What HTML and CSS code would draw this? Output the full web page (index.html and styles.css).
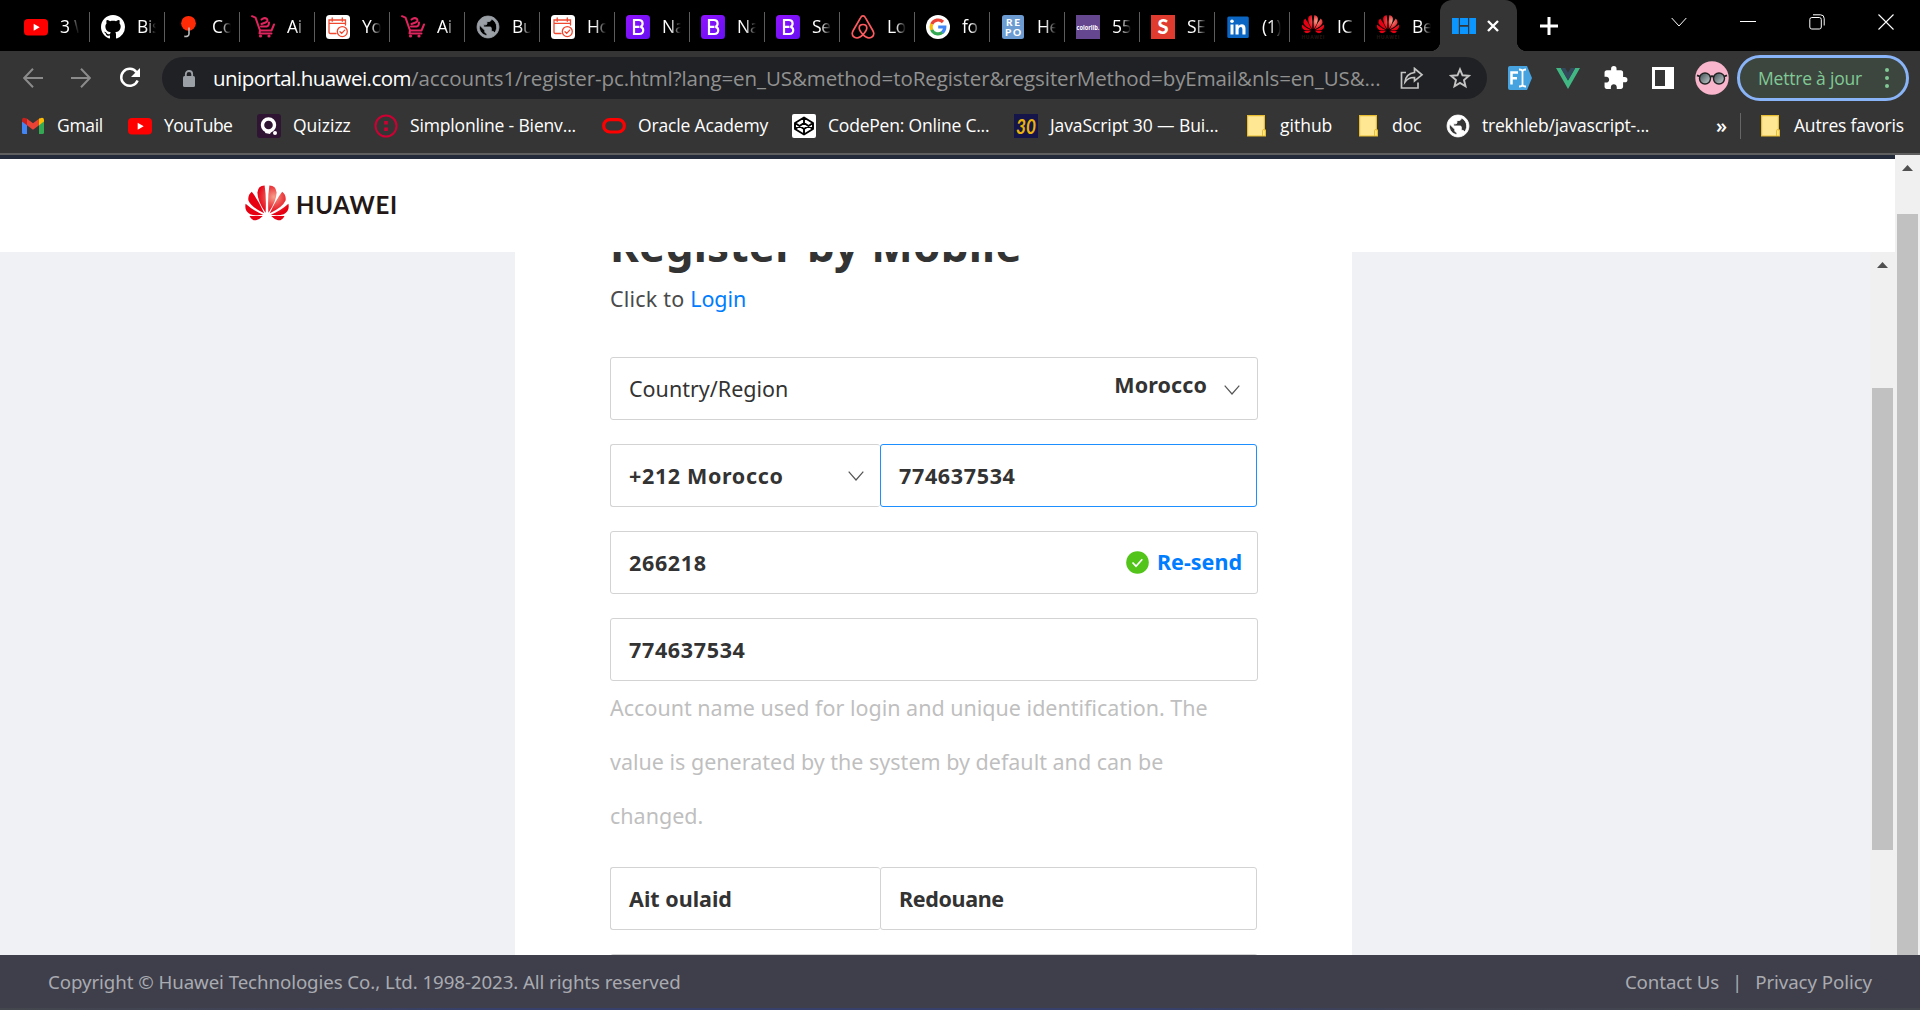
FILE: index.html
```html
<!DOCTYPE html>
<html lang="en">
<head>
<meta charset="utf-8">
<title>Register by Mobile</title>
<link rel="stylesheet" href="styles.css">
</head>
<body>
<svg class="defs" aria-hidden="true">
  <defs>
    <linearGradient id="bs" x1="0" y1="0" x2="1" y2="1"><stop offset="0" stop-color="#9013fe"/><stop offset="1" stop-color="#6610f2"/></linearGradient>
    <radialGradient id="hw" gradientUnits="userSpaceOnUse" cx="29" cy="12" r="17"><stop offset="0" stop-color="#f6a08c"/><stop offset=".5" stop-color="#ec4a4a"/><stop offset="1" stop-color="#e60012"/></radialGradient>
    <linearGradient id="lens" x1="0" y1="0" x2="1" y2="1"><stop offset="0" stop-color="#3c4a50"/><stop offset="1" stop-color="#c9d3d4"/></linearGradient>
    <symbol id="youtube" viewBox="0 0 24 24"><rect y="4" width="24" height="16.5" rx="4" fill="#f00"/><path d="M9.7 8.7v7l6-3.5z" fill="#fff"/></symbol>
    <symbol id="github" viewBox="0 0 16 16"><path fill="#fff" d="M8 0C3.58 0 0 3.58 0 8c0 3.54 2.29 6.53 5.47 7.59.4.07.55-.17.55-.38 0-.19-.01-.82-.01-1.49-2.01.37-2.53-.49-2.69-.94-.09-.23-.48-.94-.82-1.13-.28-.15-.68-.52-.01-.53.63-.01 1.08.58 1.23.82.72 1.21 1.87.87 2.33.66.07-.52.28-.87.51-1.07-1.78-.2-3.64-.89-3.64-3.95 0-.87.31-1.59.82-2.15-.08-.2-.36-1.02.08-2.12 0 0 .67-.21 2.2.82.64-.18 1.32-.27 2-.27s1.36.09 2 .27c1.53-1.04 2.2-.82 2.2-.82.44 1.1.16 1.92.08 2.12.51.56.82 1.27.82 2.15 0 3.07-1.87 3.75-3.65 3.95.29.25.54.73.54 1.48 0 1.07-.01 1.93-.01 2.2 0 .21.15.46.55.38A8.01 8.01 0 0 0 16 8c0-4.42-3.58-8-8-8z"/></symbol>
    <symbol id="balloon" viewBox="0 0 24 24"><circle cx="12.500" cy="8.300" r="7.400" fill="#ff2b06"/><path d="M13 12.500v6.300q0 3.200-4.700 2.600" fill="none" stroke="#bbb" stroke-width="1.600"/></symbol>
    <symbol id="cart" viewBox="0 0 24 24"><g fill="none" stroke="#e0245e" stroke-width="2" stroke-linecap="round" stroke-linejoin="round"><path d="M1 1.200l3.500 1.500 4.500 12.800h11.500L23 9.500"/><path d="M10.500 4.500q3-2.500 5.500-.5 1.500 2-1.500 3.500l-4 1.500M10 11.500h5.500q2.500-.5 2.500-4"/><path d="M9 15.500l-.5 3h12"/></g><circle cx="9.500" cy="21" r="1.600" fill="#e0245e"/><circle cx="18" cy="21" r="1.600" fill="#e0245e"/></symbol>
    <symbol id="calendar" viewBox="0 0 24 24"><rect width="24" height="24" rx="3.500" fill="#fff"/><g fill="none" stroke="#f0472f" stroke-width="1.300" stroke-linecap="round"><path d="M10 18.500H4.500q-1.500 0-1.500-1.500V5h16.500v5M3 8.300h16.500M6.200 3v3.300M16.300 3v3.300"/><circle cx="16.300" cy="16.600" r="5"/><path d="M14 16.700l1.700 1.700 3-3.300"/></g></symbol>
    <symbol id="globe" viewBox="1 1 22 22"><path fill="currentColor" stroke="currentColor" stroke-width=".8" d="M12 2C6.480 2 2 6.480 2 12s4.480 10 10 10 10-4.480 10-10S17.520 2 12 2zm-1 17.930c-3.950-.490-7-3.850-7-7.930 0-.620.080-1.210.210-1.790L9 15v1c0 1.100.900 2 2 2v1.930zm6.900-2.540c-.260-.810-1-1.390-1.900-1.390h-1v-3c0-.550-.450-1-1-1H8v-2h2c.550 0 1-.450 1-1V7h2c1.100 0 2-.900 2-2v-.410c2.930 1.190 5 4.060 5 7.410 0 2.080-.800 3.970-2.100 5.390z"/></symbol>
    <symbol id="bootstrap" viewBox="0 0 24 24"><rect width="24" height="24" rx="3.500" fill="url(#bs)"/><path d="M8 5v14h5.200q4-.1 4-3.800 0-2.900-2.800-3.400 2.200-.7 2.200-3.200Q16.600 5 12.800 5zM8 11.800h5.500" fill="none" stroke="#fff" stroke-width="2.200"/></symbol>
    <symbol id="airbnb" viewBox="0 0 24 24"><path d="M12 19.500q-3.800-4-3.800-6.500 0-3.500 3.800-3.500t3.800 3.500q0 2.500-3.800 6.500-3 3.500-6 3.500-4.500-.5-4.800-4.500.2-1.500 1-3L9.500 2.800Q10.500.9 12 .9t2.500 1.900L21.800 15.500q.8 1.500 1 3Q22.500 22.500 18 23q-3 0-6-3.500z" fill="none" stroke="#ff5a5f" stroke-width="1.700"/></symbol>
    <symbol id="google" viewBox="0 0 24 24"><circle cx="12" cy="12" r="12" fill="#fff"/><g fill="none" stroke-width="3.200"><path d="M17 7a7 7 0 0 0-11.300 2.200" stroke="#ea4335"/><path d="M5.800 9a7 7 0 0 0 0 6" stroke="#fbbc05"/><path d="M5.700 14.800A7 7 0 0 0 16.500 17.300" stroke="#34a853"/><path d="M12.200 12h6.600q0 3.500-2.500 5.500" stroke="#4285f4"/></g></symbol>
    <symbol id="colorlib" viewBox="0 0 24 24"><rect width="24" height="24" fill="#65478f"/><text x="12" y="14.500" font-family="Open Sans" font-size="6.800" font-weight="700" fill="#fff" text-anchor="middle" textLength="23" lengthAdjust="spacingAndGlyphs">colorlib.</text></symbol>
    <symbol id="repo" viewBox="0 0 24 24"><rect x="1" width="22" height="24" rx="2.500" fill="#6c9bd2"/><g font-family="Lato" font-weight="900" font-size="10" fill="#fff" text-anchor="middle"><text x="12" y="11" textLength="14">RE</text><text x="12" y="21" textLength="16">PO</text></g></symbol>
    <symbol id="sred" viewBox="0 0 24 24"><rect width="24" height="24" fill="#df3c2f"/><text x="12" y="19" font-family="Lato" font-weight="900" font-size="20" fill="#fff" text-anchor="middle">S</text></symbol>
    <symbol id="linkedin" viewBox="0 0 24 24"><rect x="1.300" y="1.500" width="21.500" height="21.500" rx="1.500" fill="#0a66c2"/><path fill="#fff" d="M4.500 9.500h3v10h-3zM9.500 9.500h3v1.400q1-1.600 3.200-1.600 3.800 0 3.800 4.300v5.900h-3.100v-5.300q0-2.300-1.700-2.300-2.100 0-2.100 2.500v5.100H9.500z"/><circle cx="6" cy="6.300" r="1.800" fill="#fff"/></symbol>
    <symbol id="petals" viewBox="0 0 44 36">
      <path d="M20.600 27.800Q21.500 12 19.600.6 13 .8 12.400 7.500q.2 9 8.200 20.300zM19.200 28.300Q13.500 15.500 6.800 6.800 2.600 10 3.400 15.600 6.500 22.500 19.200 28.300zM18.300 29.700Q8.500 25.800.6 18.700q-1.500 7.300 4.600 10.500 5.500 1.700 13.100.5zM17.800 30.900H4.500q2.500 4.900 6.500 4.400 3.500-1 6.800-4.400z"/>
      <path d="M23.400 27.800Q22.500 12 24.400.6 31 .8 31.600 7.500q-.2 9-8.200 20.300zM24.800 28.300Q30.500 15.500 37.200 6.800q4.200 3.200 3.400 8.800Q37.500 22.500 24.800 28.300zM25.700 29.700q9.800-3.900 17.700-11 1.500 7.300-4.600 10.500-5.500 1.700-13.100.5zM26.200 30.900h13.300q-2.500 4.900-6.500 4.400-3.500-1-6.800-4.400z"/>
    </symbol>
    <symbol id="huawei" viewBox="0 0 24 24"><use href="#petals" x="0" y="0" width="24" height="18.500" fill="url(#hw)"/><text x="12" y="23.700" font-family="Open Sans" font-size="5" font-weight="700" fill="#231815" text-anchor="middle" textLength="23">HUAWEI</text></symbol>
    <symbol id="gmail" viewBox="0 0 24 24"><path d="M1 7v11.500q0 1.500 1.500 1.500H6V10z" fill="#4285f4"/><path d="M23 7v11.500q0 1.500-1.500 1.500H18V10z" fill="#34a853"/><path d="M18 4.500v6.800l5-3.800V6q0-2.300-2-2.300-1 0-1.600.5z" fill="#fbbc04"/><path d="M6 4.500v6.800L1 7.500V6q0-2.300 2-2.300 1 0 1.600.5z" fill="#c5221f"/><path d="M6 4.800l6 4.500 6-4.500v6.500l-6 4.500-6-4.500z" fill="#ea4335"/></symbol>
    <symbol id="quizizz" viewBox="0 0 24 24"><rect width="24" height="24" rx="3" fill="#2f1434"/><circle cx="11.500" cy="11" r="6" fill="none" stroke="#fff" stroke-width="3.400"/><path d="M9 16.500l5 1.500-1 2-5-1z" fill="#fff"/><circle cx="18" cy="19" r="2" fill="#fff"/></symbol>
    <symbol id="simplon" viewBox="0 0 24 24"><circle cx="12" cy="12" r="10.500" fill="none" stroke="#ce0033" stroke-width="2"/><path d="M10.200 7h3.600v3.600h-3.600zM10.200 13.400h3.600V17h-3.600z" fill="#ce0033"/></symbol>
    <symbol id="oracle" viewBox="0 0 24 24"><rect x="1.700" y="5.700" width="20.600" height="12.300" rx="6.100" fill="none" stroke="#f00" stroke-width="3.200"/></symbol>
    <symbol id="codepen" viewBox="0 0 24 24"><rect width="24" height="24" rx="2" fill="#fff"/><path d="M12 3.500l9 5.500v6l-9 5.500L3 15V9zM12 3.500V9m0 6v5.500M3 9l9 6 9-6M3 15l9-6 9 6" fill="none" stroke="#000" stroke-width="1.900" stroke-linejoin="round"/></symbol>
    <symbol id="js30" viewBox="0 0 24 24"><rect width="24" height="24" fill="#16154a"/><text x="12" y="20" font-family="Lato" font-style="italic" font-weight="700" font-size="20" fill="#eab308" text-anchor="middle" textLength="20" lengthAdjust="spacingAndGlyphs">30</text></symbol>
    <symbol id="folder" viewBox="0 0 24 24"><path d="M3.600 1.600h16.800V16h1v6H3.600z" fill="#ffe794" stroke="#e8bd30" stroke-width="1.200"/><path d="M18.500 22v-5.500q0-1 1.500-1" fill="none" stroke="#e8bd30"/></symbol>
    <symbol id="chevron" viewBox="0 0 16 10"><path d="M.7.7L8 9 15.300.7" fill="none" stroke="currentColor" stroke-width="1.200"/></symbol>
    <symbol id="arrow-up" viewBox="0 0 11 6"><path d="M5.500 0L11 6H0z" fill="#505050"/></symbol>
  </defs>
</svg>

<div class="window">
  <header class="tabstrip">
    <div class="tab first"><svg class="fav"><use href="#youtube"/></svg><span>3 W</span></div>
    <div class="tab"><svg class="fav"><use href="#github"/></svg><span>Bis</span></div>
    <div class="tab"><svg class="fav"><use href="#balloon"/></svg><span>Co</span></div>
    <div class="tab"><svg class="fav"><use href="#cart"/></svg><span>Ai</span></div>
    <div class="tab"><svg class="fav"><use href="#calendar"/></svg><span>Yo</span></div>
    <div class="tab"><svg class="fav"><use href="#cart"/></svg><span>Ai</span></div>
    <div class="tab"><svg class="fav gray-globe"><use href="#globe"/></svg><span>Bu</span></div>
    <div class="tab"><svg class="fav"><use href="#calendar"/></svg><span>Ho</span></div>
    <div class="tab"><svg class="fav"><use href="#bootstrap"/></svg><span>Na</span></div>
    <div class="tab"><svg class="fav"><use href="#bootstrap"/></svg><span>Na</span></div>
    <div class="tab"><svg class="fav"><use href="#bootstrap"/></svg><span>Se</span></div>
    <div class="tab"><svg class="fav"><use href="#airbnb"/></svg><span>Lo</span></div>
    <div class="tab"><svg class="fav"><use href="#google"/></svg><span>fo</span></div>
    <div class="tab"><svg class="fav"><use href="#repo"/></svg><span>He</span></div>
    <div class="tab"><svg class="fav"><use href="#colorlib"/></svg><span>55</span></div>
    <div class="tab"><svg class="fav"><use href="#sred"/></svg><span>SE</span></div>
    <div class="tab"><svg class="fav"><use href="#linkedin"/></svg><span>(1)</span></div>
    <div class="tab"><svg class="fav"><use href="#huawei"/></svg><span>IC</span></div>
    <div class="tab last-tab"><svg class="fav"><use href="#huawei"/></svg><span>Be</span></div>
    <div class="tab-active">
      <svg width="24" height="24" viewBox="0 0 24 24"><path fill="#0a95ff" d="M0 4h6.800v16H0zM8 4h8v7H8zM8 12.800h8V20H8zM17.200 4H24v16h-6.800z"/></svg>
      <svg width="12" height="12" viewBox="0 0 12 12"><path d="M1 1l10 10M11 1L1 11" stroke="#fff" stroke-width="2.400"/></svg>
    </div>
    <svg class="new-tab" width="18" height="18" viewBox="0 0 18 18"><path d="M9 0v18M0 9h18" stroke="#fff" stroke-width="3"/></svg>
    <div class="window-controls">
      <svg width="16" height="16" viewBox="0 0 16 16"><path d="M.7 4L8 12l7.300-8" fill="none" stroke="#fff"/></svg>
      <svg width="16" height="16" viewBox="0 0 16 16"><path d="M0 7.500h16" stroke="#fff"/></svg>
      <svg width="16" height="16" viewBox="0 0 16 16"><rect x=".8" y="3.500" width="11.500" height="11.500" rx="2" fill="none" stroke="#fff"/><path d="M4 .8h7.500q3.700 0 3.700 3.700v7" fill="none" stroke="#fff"/></svg>
      <svg width="16" height="16" viewBox="0 0 16 16"><path d="M.5.500l15 15M15.500.500l-15 15" stroke="#fff" stroke-width="1.100"/></svg>
    </div>
  </header>

  <div class="toolbar">
    <div class="nav">
      <svg width="20" height="20" viewBox="0 0 20 20"><path d="M20 10H1.500M10 .8L1.200 10l8.800 9.200" fill="none" stroke="#8b8b8b" stroke-width="2"/></svg>
      <svg width="20" height="20" viewBox="0 0 20 20"><path d="M0 10h18.500M10 .8l8.800 9.200-8.800 9.200" fill="none" stroke="#8b8b8b" stroke-width="2"/></svg>
      <svg width="22" height="22" viewBox="0 0 22 22"><path d="M18.600 13.500A8.500 8.500 0 1 1 17.500 5.200" fill="none" stroke="#fff" stroke-width="2.500"/><path d="M21 1v9h-9z" fill="#fff"/></svg>
    </div>
    <div class="omnibox">
      <svg class="lock" width="12" height="17" viewBox="0 0 12 17"><rect y="6" width="12" height="11" rx="1.500" fill="#9aa0a6"/><path d="M2.800 7V4.200a3.200 3.200 0 0 1 6.400 0V7" fill="none" stroke="#9aa0a6" stroke-width="1.800"/></svg>
      <span class="host">uniportal.huawei.com</span><span class="path">/accounts1/register-pc.html?lang=en_US&amp;method=toRegister&amp;regsiterMethod=byEmail&amp;nls=en_US&amp;...</span>
      <svg class="share" width="24" height="22" viewBox="0 0 24 22"><g fill="none" stroke="#c4c4c4" stroke-width="1.700"><path d="M6 5.500H1.500V21H18v-5.500"/><path d="M14.500 1.500l7.500 6.300-7.500 6.200v-3.500q-6-.3-9.500 4.500 1-8.500 9.500-9.500z"/></g></svg>
      <svg class="star" width="22" height="22" viewBox="0 0 22 22"><path d="M11 2.300l2.500 6 6.400.5-4.900 4.200 1.500 6.300-5.500-3.400-5.500 3.400 1.500-6.300-4.900-4.200 6.400-.5z" fill="none" stroke="#c4c4c4" stroke-width="1.900"/></svg>
    </div>
    <div class="extensions">
      <svg width="24" height="24" viewBox="0 0 24 24"><path d="M2 0h17l5 12-5 12H2q-2 0-2-2V2Q0 0 2 0z" fill="#46a3e0"/><path d="M3.500 18.500v-12H10M3.500 12.300h5.500" fill="none" stroke="#fff" stroke-width="2.500"/><path d="M11 3.500q3.500 0 3.500 2 0-2 3.500-2M14.500 5v14M11 20.500q3.500 0 3.500-2 0 2 3.500 2" fill="none" stroke="#fff" stroke-width="1.800"/></svg>
      <svg width="24" height="24" viewBox="0 0 24 24"><path d="M0 2h4.800L12 14.500 19.200 2H24L12 23z" fill="#41b883"/><path d="M4.800 2h4.500L12 6.700 14.700 2h4.500L12 14.500z" fill="#35495e"/></svg>
      <svg width="24" height="24" viewBox="1.500 1 22 22"><path d="M20.500 11H19V7c0-1.100-.9-2-2-2h-4V3.500a2.500 2.500 0 0 0-5 0V5H4c-1.100 0-2 .9-2 2v3.800h1.500c1.500 0 2.700 1.200 2.700 2.700S5 16.200 3.500 16.200H2V20c0 1.100.9 2 2 2h3.800v-1.500c0-1.500 1.200-2.700 2.700-2.700s2.700 1.200 2.700 2.700V22H17c1.100 0 2-.9 2-2v-4h1.500a2.500 2.500 0 0 0 0-5z" fill="#fff"/></svg>
      <svg width="22" height="22" viewBox="0 0 22 22"><path fill="#fff" fill-rule="evenodd" d="M0 0h22v22H0zM3 3h10v16H3z"/></svg>
      <svg width="34" height="34" viewBox="0 0 34 34"><circle cx="17" cy="17" r="16.700" fill="#f8b5cb"/><g stroke="#222" stroke-width="1.400" fill="url(#lens)"><circle cx="10" cy="17.500" r="5.500"/><circle cx="24" cy="17.500" r="5.500"/></g><path d="M15 16q2-1.500 4 0M5 15.500l-3-1.200M29 15.500l3-1.200" fill="none" stroke="#222" stroke-width="1.800"/></svg>
    </div>
    <button class="update"><span>Mettre à jour</span><i></i></button>
  </div>

  <nav class="bookmarks">
    <a><svg class="fav"><use href="#gmail"/></svg><span class="t1">Gmail</span></a>
    <a><svg class="fav"><use href="#youtube"/></svg><span class="t2">YouTube</span></a>
    <a><svg class="fav"><use href="#quizizz"/></svg><span>Quizizz</span></a>
    <a><svg class="fav"><use href="#simplon"/></svg><span class="t3">Simplonline - Bienv...</span></a>
    <a><svg class="fav"><use href="#oracle"/></svg><span class="t3">Oracle Academy</span></a>
    <a><svg class="fav"><use href="#codepen"/></svg><span class="t4">CodePen: Online C...</span></a>
    <a><svg class="fav"><use href="#js30"/></svg><span class="t5">JavaScript 30 — Bui...</span></a>
    <a><svg class="fav"><use href="#folder"/></svg><span>github</span></a>
    <a><svg class="fav"><use href="#folder"/></svg><span>doc</span></a>
    <a><svg class="fav white-globe"><use href="#globe"/></svg><span class="t4">trekhleb/javascript-...</span></a>
    <b class="more">»</b>
    <a class="others"><svg class="fav"><use href="#folder"/></svg><span class="t4">Autres favoris</span></a>
  </nav>

  <div class="viewport">
    <div class="page">
      <div class="site-header">
        <svg class="mark" viewBox="0 0 44 36"><use href="#petals" width="44" height="36" fill="url(#hw)"/></svg>
        <svg class="wordmark" width="101" height="20" viewBox="0 0 101 20"><text x="-1" y="18" font-family="Lato" font-size="24" font-weight="700" fill="#231815" textLength="101" lengthAdjust="spacing">HUAWEI</text></svg>
      </div>
      <main class="scroller">
        <section class="card">
          <h1>Register by Mobile</h1>
          <p class="login">Click to <a>Login</a></p>
          <div class="field country"><span>Country/Region</span><span class="picked">Morocco</span><svg class="chev"><use href="#chevron"/></svg></div>
          <div class="row">
            <div class="field strong left"><span class="wide">+212 Morocco</span><svg class="chev"><use href="#chevron"/></svg></div>
            <div class="field strong right focus"><span class="wide">774637534</span></div>
          </div>
          <div class="field strong code"><span class="wide">266218</span>
            <svg class="ok" width="23" height="23" viewBox="0 0 23 23"><circle cx="11.500" cy="11.500" r="11.300" fill="#52c41a"/><path d="M6.500 11.500l3.500 3.700 6.300-7" fill="none" stroke="#fff" stroke-width="1.700"/></svg>
            <a class="resend">Re-send</a></div>
          <div class="field strong account"><span class="wide">774637534</span></div>
          <p class="hint">Account name used for login and unique identification. The value is generated by the system by default and can be changed.</p>
          <div class="row">
            <div class="field strong left"><span>Ait oulaid</span></div>
            <div class="field strong right"><span class="tight">Redouane</span></div>
          </div>
          <div class="field"></div>
        </section>
        <div class="scrollbar inner"><svg><use href="#arrow-up"/></svg><i></i></div>
      </main>
    </div>
    <div class="scrollbar outer"><svg><use href="#arrow-up"/></svg><i></i></div>
  </div>
  <footer class="footer">
    <span>Copyright © Huawei Technologies Co., Ltd. 1998-2023. All rights reserved</span>
    <span class="links"><a>Contact Us</a><em>|</em><a>Privacy Policy</a></span>
  </footer>
</div>
</body>
</html>
```
FILE: styles.css
```css
* { box-sizing: border-box; }
body { margin: 0; font-family: "Open Sans", "Noto Sans", sans-serif; background: #000; }
.defs { position: absolute; width: 0; height: 0; }
svg { flex: none; display: block; }
.window { width: 1920px; height: 1010px; display: flex; flex-direction: column; overflow: hidden; }
.window > * { flex: none; }

/* tabs */
.tabstrip { height: 51px; background: #000; display: flex; align-items: center; padding-left: 14px; color: #fff; }
.tab { width: 75px; height: 30px; padding: 0 0 0 11px; display: flex; align-items: center; gap: 12px; border-right: 1px solid #5c5c5c; margin-top: 2px; }
.tab.first { width: 76px; padding-left: 10px; }
.tab.last-tab { border: 0; }
.tab span { width: 19px; overflow: hidden; white-space: nowrap; font-size: 17.5px; line-height: 26px; padding-bottom: 2px; letter-spacing: -0.3px; -webkit-mask-image: linear-gradient(90deg, #000 45%, transparent); mask-image: linear-gradient(90deg, #000 45%, transparent); }
.fav { width: 24px; height: 24px; }
.gray-globe { color: #9aa0a6; }
.white-globe { color: #fff; }
.tab-active { position: relative; width: 77px; height: 51px; background: #353535; border-radius: 12px 12px 0 0; display: flex; align-items: center; gap: 11px; padding-left: 12px; }
.tab-active::before, .tab-active::after { content: ""; position: absolute; bottom: 0; width: 10px; height: 10px; }
.tab-active::before { left: -10px; background: radial-gradient(circle at 0 0, transparent 10px, #353535 10.5px); }
.tab-active::after { right: -10px; background: radial-gradient(circle at 100% 0, transparent 10px, #353535 10.5px); }
.new-tab { margin-left: 23px; }
.window-controls { display: flex; gap: 53px; margin-left: auto; padding-right: 26px; margin-bottom: 8px; }

/* address bar */
.toolbar { height: 53px; background: #353535; display: flex; align-items: center; }
.nav { width: 162px; display: flex; align-items: center; gap: 28px; padding-left: 23px; }
.omnibox { width: 1325px; height: 42px; margin-top: 1px; border-radius: 21px; background: #202124; display: flex; align-items: center; padding-left: 21px; font-size: 20.5px; white-space: nowrap; color: #919191; }
.lock { margin-right: 18px; }
.host { color: #fff; width: 198px; letter-spacing: -0.52px; }
.path { width: 968px; letter-spacing: -0.08px; }
.share { margin-left: 21px; }
.star { margin-left: 25px; }
.extensions { display: flex; align-items: center; margin-left: 21px; gap: 24px; }
.extensions svg:nth-child(5) { margin-left: -3px; }
.update { margin-left: 8px; width: 172px; height: 46px; border: 3px solid #8ab4f8; border-radius: 23px; background: #3c463f; color: #81c995; font: 17.5px/26px "Open Sans", sans-serif; letter-spacing: -0.21px; display: flex; align-items: center; padding: 0 0 0 18px; white-space: nowrap; }
.update span { width: 127px; text-align: left; }
.update i { width: 4px; height: 4px; border-radius: 2px; background: #81c995; box-shadow: 0 -8px #81c995, 0 8px #81c995; }

/* bookmarks */
.bookmarks { height: 51px; background: #353535; border-bottom: 2px solid #5f5f5f; display: grid; grid-template-columns: 107px 129px 117px 228px 190px 222px 230px 112px 90px 270px 23px 178px; align-items: center; padding: 0 0 6px 21px; color: #fff; font-size: 17.5px; white-space: nowrap; }
.bookmarks a { display: flex; align-items: center; gap: 12px; }
.bookmarks a span { padding-bottom: 2px; }
.t1 { letter-spacing: -0.3px; }
.t2 { letter-spacing: -0.5px; }
.t3 { letter-spacing: -0.16px; }
.t4 { letter-spacing: -0.2px; }
.t5 { letter-spacing: -0.1px; }
.more { font-size: 20px; line-height: 24px; font-weight: 600; }
.bookmarks .others { border-left: 1px solid #666; padding-left: 17px; margin-left: 1px; }

/* page */
.viewport { height: 800px; display: flex; }
.page { width: 1895px; border-top: 4px solid #232b3b; background: #fff; display: flex; flex-direction: column; }
.site-header { height: 93px; display: flex; align-items: flex-start; padding: 26px 0 0 245px; }
.mark { width: 44px; height: 36px; }
.wordmark { margin: 11px 0 0 8px; overflow: visible; }
.scroller { height: 703px; background: #eff1f5; display: flex; overflow: hidden; padding-left: 515px; justify-content: space-between; }
.card { width: 837px; height: 800px; background: #fff; padding: 0 94px 0 95px; font-family: "Noto Sans", sans-serif; font-size: 21.5px; color: #333; }
h1 { margin: -37px 0 0; font-size: 44px; line-height: 60px; font-weight: 700; letter-spacing: 0.25px; white-space: nowrap; }
.login { margin: 7px 0 0; line-height: 34px; color: #4a4a4a; letter-spacing: 0.2px; }
.login a { color: #007dff; letter-spacing: -0.1px; }
.field { width: 648px; height: 63px; border: 1px solid #d3d3d3; border-radius: 3px; background: #fff; display: flex; align-items: center; padding: 0 17px 0 18px; margin-bottom: 24px; white-space: nowrap; }
.country { margin-top: 41px; }
.picked { margin-left: auto; margin-bottom: 8px; font-weight: 700; letter-spacing: 0.1px; }
.country .chev { margin: 2px 0 0 17px; }
.chev { width: 16px; height: 10px; color: #555; }
.strong { font-weight: 700; }
.wide { letter-spacing: 0.65px; }
.tight { letter-spacing: -0.35px; }
.row { display: flex; }
.left { width: 270px; border-right: 0; justify-content: space-between; padding-right: 16px; }
.right { width: 377px; padding-left: 18px; }
.focus { border-color: #1e8fff; }
.code { padding-right: 15px; }
.ok { margin-left: auto; }
.resend { color: #007dff; margin-left: 8px; padding-bottom: 2px; }
.account { margin-bottom: 0; }
.hint { margin: 0 0 24px; line-height: 54px; color: #bfbfbf; }

/* scrollbars */
.scrollbar { width: 25px; background: #f0f0f0; display: flex; flex-direction: column; align-items: center; }
.scrollbar svg { width: 11px; height: 6px; margin-top: 10px; }
.scrollbar i { width: 21px; background: #c1c1c1; }
.outer i { margin-top: 43px; height: 741px; }
.inner i { margin-top: 120px; height: 462px; }

/* footer */
.footer { height: 55px; background: linear-gradient(90deg, #44474d, #3f4256 15%, #36406a 25%, #36406a 60%, #414350 75%, #44474d) 0 53px / 100% 2px no-repeat #3f3f4b; color: #a9abb1; display: flex; align-items: center; justify-content: space-between; font: 18.7px "Noto Sans", sans-serif; letter-spacing: -0.08px; padding: 0 48px 2px; white-space: nowrap; }
.links { display: flex; }
.links em { font-style: normal; width: 36px; text-align: center; }
```
